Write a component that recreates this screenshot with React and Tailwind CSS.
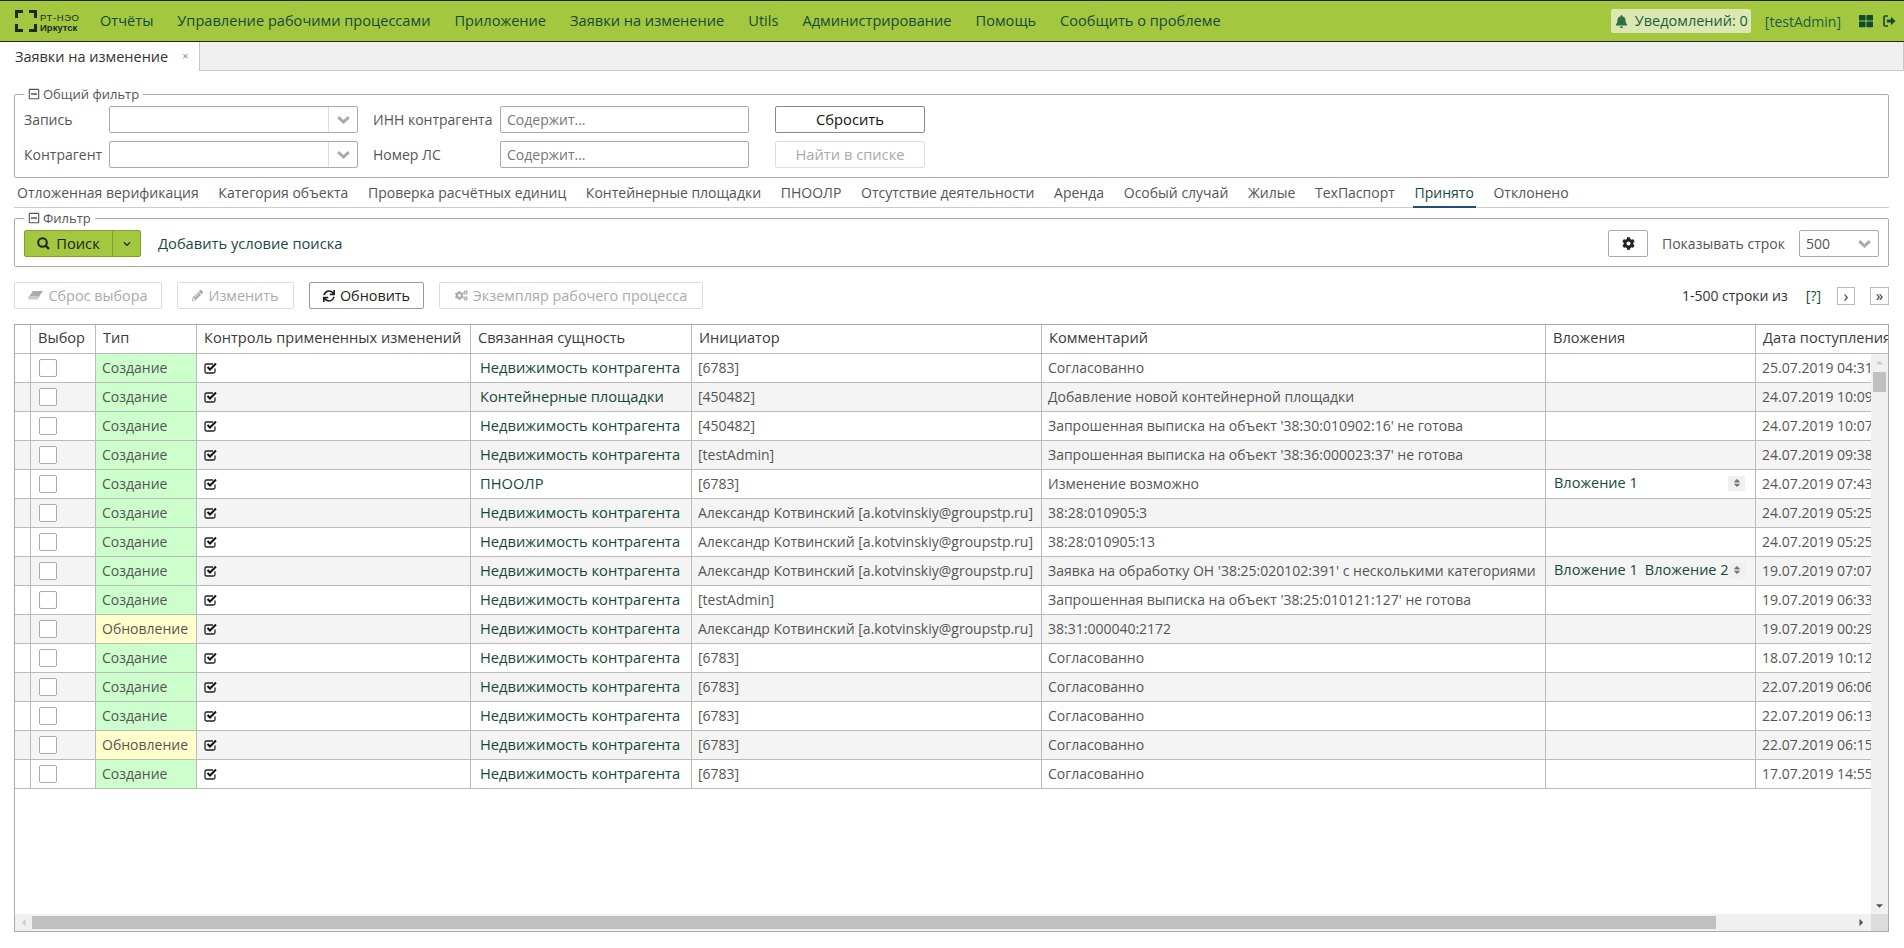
import {
  FaBell,
  FaThLarge,
  FaRegMinusSquare,
  FaChevronDown,
  FaCog,
  FaCogs,
  FaPencilAlt,
  FaSync,
  FaSort,
  FaCaretUp,
  FaCaretDown,
  FaCaretLeft,
  FaCaretRight,
} from "react-icons/fa";

const menu = [
  "Отчёты",
  "Управление рабочими процессами",
  "Приложение",
  "Заявки на изменение",
  "Utils",
  "Администрирование",
  "Помощь",
  "Сообщить о проблеме",
];

const tabs = [
  "Отложенная верификация",
  "Категория объекта",
  "Проверка расчётных единиц",
  "Контейнерные площадки",
  "ПНООЛР",
  "Отсутствие деятельности",
  "Аренда",
  "Особый случай",
  "Жилые",
  "ТехПаспорт",
  "Принято",
  "Отклонено",
];

const nedv = "Недвижимость контрагента";
const kotv = "Александр Котвинский [a.kotvinskiy@groupstp.ru]";
const soglas = "Согласованно";

const rows = [
  ["Создание", nedv, "[6783]", soglas, [], "25.07.2019 04:31"],
  ["Создание", "Контейнерные площадки", "[450482]", "Добавление новой контейнерной площадки", [], "24.07.2019 10:09"],
  ["Создание", nedv, "[450482]", "Запрошенная выписка на объект '38:30:010902:16' не готова", [], "24.07.2019 10:07"],
  ["Создание", nedv, "[testAdmin]", "Запрошенная выписка на объект '38:36:000023:37' не готова", [], "24.07.2019 09:38"],
  ["Создание", "ПНООЛР", "[6783]", "Изменение возможно", ["Вложение 1"], "24.07.2019 07:43"],
  ["Создание", nedv, kotv, "38:28:010905:3", [], "24.07.2019 05:25"],
  ["Создание", nedv, kotv, "38:28:010905:13", [], "24.07.2019 05:25"],
  ["Создание", nedv, kotv, "Заявка на обработку ОН '38:25:020102:391' с несколькими категориями", ["Вложение 1", "Вложение 2"], "19.07.2019 07:07"],
  ["Создание", nedv, "[testAdmin]", "Запрошенная выписка на объект '38:25:010121:127' не готова", [], "19.07.2019 06:33"],
  ["Обновление", nedv, kotv, "38:31:000040:2172", [], "19.07.2019 00:29"],
  ["Создание", nedv, "[6783]", soglas, [], "18.07.2019 10:12"],
  ["Создание", nedv, "[6783]", soglas, [], "22.07.2019 06:06"],
  ["Создание", nedv, "[6783]", soglas, [], "22.07.2019 06:13"],
  ["Обновление", nedv, "[6783]", soglas, [], "22.07.2019 06:15"],
  ["Создание", nedv, "[6783]", soglas, [], "17.07.2019 14:55"],
];

function Logo() {
  return (
    <div className="flex items-center w-[86px] shrink-0 pl-[1px]">
      <svg width="22" height="22" viewBox="0 0 22 22" fill="none" stroke="#1c2b22" strokeWidth="3">
        <path d="M8 1.5H1.5V8" />
        <path d="M14 1.5H20.5V8" />
        <path d="M1.5 14V20.5H8" />
        <path d="M20.5 14V20.5H14" />
      </svg>
      <div className="ml-[3px] mt-[3px] text-[9.5px] leading-[10px] font-bold text-[#1c2b22] font-['Liberation_Sans',sans-serif]">
        <div className="font-normal tracking-[0.6px]">РТ-НЭО</div>
        <div>Иркутск</div>
      </div>
    </div>
  );
}

function Chevron() {
  return (
    <svg width="13" height="8" viewBox="0 0 13 8" fill="none" stroke="#aaa" strokeWidth="3">
      <path d="M1.2 1.2L6.5 6L11.8 1.2" />
    </svg>
  );
}

function SearchIcon() {
  return (
    <svg width="13" height="13" viewBox="0 0 13 13" fill="none" stroke="#222" strokeWidth="2">
      <circle cx="5.5" cy="5.5" r="4.3" />
      <path d="M8.5 8.5L12 12" strokeWidth="2.4" />
    </svg>
  );
}

function EraserIcon() {
  return (
    <svg width="15" height="11" viewBox="0 0 15 11">
      <path d="M5 1H15L10 8H0Z" fill="#aaa" />
      <path d="M2 6H12L9.8 9.5H0Z" fill="#ccc" />
    </svg>
  );
}

function CheckIcon() {
  return (
    <svg width="14" height="12" viewBox="0 0 14 12" fill="none" className="block">
      <path d="M11 6.5V9.5A1.5 1.5 0 0 1 9.5 11H2.5A1.5 1.5 0 0 1 1 9.5V3.5A1.5 1.5 0 0 1 2.5 2H9" stroke="#222" strokeWidth="1.3" />
      <path d="M3.5 5L6 7.5L12 1.5" stroke="#111" strokeWidth="2" />
    </svg>
  );
}

function SignOutIcon() {
  return (
    <svg width="13" height="12" viewBox="0 0 13 12" fill="none">
      <path d="M5 1H2A1 1 0 0 0 1 2V10A1 1 0 0 0 2 11H5" stroke="#0f4a32" strokeWidth="1.6" />
      <path d="M4 4.5H8V1.8L12.5 6L8 10.2V7.5H4Z" fill="#0f4a32" />
    </svg>
  );
}

function Combo() {
  return (
    <div className="w-[249px] h-[27px] flex border border-[#aaa] rounded-[2px] bg-white">
      <div className="flex-1" />
      <div className="w-[29px] flex items-center justify-center border-l border-[#ddd]">
        <Chevron />
      </div>
    </div>
  );
}

function TextField() {
  return (
    <input
      className="w-[249px] h-[27px] border border-[#aaa] rounded-[2px] px-[6px] text-[14px] text-[#555] placeholder:text-[#777] outline-none"
      placeholder="Содержит..."
    />
  );
}

function Legend({ title }) {
  return (
    <legend className="px-[4px] text-[13px] leading-[18px] text-[#555] flex items-center gap-[3px]">
      <FaRegMinusSquare className="text-[12px] text-[#555]" />
      {title}
    </legend>
  );
}

function ActionButton({ icon, label, width, disabled }) {
  return (
    <button
      className={`${width} h-[27px] flex items-center justify-center gap-[5px] rounded-[2px] border text-[14.4px] bg-white ${
        disabled ? "border-[#ddd] text-[#aaa]" : "border-[#999] text-[#222]"
      }`}
    >
      {icon}
      {label}
    </button>
  );
}

function Cell({ children, className = "" }) {
  return (
    <td className={`h-[29px] border-r border-b border-[#bbb] px-[7px] pt-0 pb-[2px] whitespace-nowrap overflow-hidden ${className}`}>
      {children}
    </td>
  );
}

function Attachments({ items }) {
  if (items.length === 0) return null;
  return (
    <div className="flex items-center">
      <div className="flex-1 flex gap-[7px] pl-[2px] text-[14.5px] text-[#164a38]">
        {items.map((a) => (
          <span key={a}>{a}</span>
        ))}
      </div>
      <span className="shrink-0 w-[17px] h-[15px] bg-[#f0f0f0] flex items-center justify-center">
        <FaSort className="text-[10px] text-[#777]" />
      </span>
    </div>
  );
}

function Grid() {
  const heads = ["", "Выбор", "Тип", "Контроль примененных изменений", "Связанная сущность", "Инициатор", "Комментарий", "Вложения", "Дата поступления"];
  return (
    <div className="relative h-[608px] border border-[#aaa] overflow-hidden">
      <table className="table-fixed border-separate border-spacing-0 w-[1975px] text-[14px] text-[#555]">
        <colgroup>
          <col className="w-[16px]" />
          <col className="w-[65px]" />
          <col className="w-[101px]" />
          <col className="w-[274px]" />
          <col className="w-[221px]" />
          <col className="w-[350px]" />
          <col className="w-[504px]" />
          <col className="w-[210px]" />
          <col className="w-[234px]" />
        </colgroup>
        <thead>
          <tr>
            {heads.map((h, i) => (
              <th
                key={i}
                className="h-[29px] border-r border-b border-[#bbb] pl-[7px] pr-[4px] pb-[2px] text-left text-[14.6px] font-normal text-[#3a3a3a] whitespace-nowrap overflow-hidden"
              >
                {h}
              </th>
            ))}
          </tr>
        </thead>
        <tbody>
          {rows.map((r, i) => (
            <tr key={i} className={i % 2 === 1 ? "bg-[#f4f4f4]" : "bg-white"}>
              <Cell />
              <Cell className="!pb-0">
                <div className="w-[18px] h-[18px] ml-[1px] border border-[#aaa] rounded-[2px] bg-white" />
              </Cell>
              <Cell className={r[0] === "Создание" ? "bg-[#ccffcc] !pl-[6px]" : "bg-[#ffffcc] !pl-[6px]"}>{r[0]}</Cell>
              <Cell className="!pb-0">
                <CheckIcon />
              </Cell>
              <Cell className="text-[#164a38] text-[14.7px] !pl-[9px]">{r[1]}</Cell>
              <Cell className="!pl-[6px]">{r[2]}</Cell>
              <Cell className="!pl-[6px]">{r[3]}</Cell>
              <Cell className="!pr-[10px] !pl-[6px]">
                <Attachments items={r[4]} />
              </Cell>
              <Cell className="!pl-[6px]">{r[5]}</Cell>
            </tr>
          ))}
        </tbody>
      </table>

      <div className="absolute right-0 top-[29px] bottom-[17px] w-[17px] bg-[#f0f0f0]">
        <FaCaretUp className="absolute top-[3px] left-[3px] text-[11px] text-[#ccc]" />
        <div className="absolute top-[18px] left-[2px] w-[13px] h-[20px] bg-[#c0c0c0]" />
        <FaCaretDown className="absolute bottom-[3px] left-[3px] text-[11px] text-[#555]" />
      </div>
      <div className="absolute left-0 right-[17px] bottom-0 h-[17px] bg-[#f0f0f0]">
        <FaCaretLeft className="absolute top-[3px] left-[3px] text-[11px] text-[#ccc]" />
        <div className="absolute top-[2px] left-[17px] w-[1684px] h-[13px] bg-[#c0c0c0]" />
        <FaCaretRight className="absolute top-[3px] right-[4px] text-[11px] text-[#555]" />
      </div>
      <div className="absolute right-0 bottom-0 w-[17px] h-[17px] bg-[#dcdcdc]" />
    </div>
  );
}

export default function App() {
  return (
    <div className="w-[1904px] h-[948px] overflow-hidden bg-white font-['Open_Sans',sans-serif] text-[14px] text-[#555]">
      <header className="h-[42px] flex items-center bg-[#a3c83f] border-y border-[#222] pl-[14px] pr-[8px]">
        <Logo />
        <nav className="flex gap-[24px] text-[#164a38] text-[14.6px]">
          {menu.map((m) => (
            <span key={m}>{m}</span>
          ))}
        </nav>
        <div className="ml-auto flex items-center">
          <div className="w-[140px] h-[24px] flex items-center pl-[4px] gap-[7px] rounded-[2px] bg-[#dbe8b2] text-[14.5px] text-[#1d5c45]">
            <FaBell className="text-[13px] text-[#2f6f45]" />
            Уведомлений: 0
          </div>
          <span className="ml-[14px] text-[#1d5c45]">[testAdmin]</span>
          <FaThLarge className="ml-[18px] text-[14px] text-[#0f4a32]" />
          <span className="ml-[10px]">
            <SignOutIcon />
          </span>
        </div>
      </header>

      <div className="h-[29px] flex bg-[#f0f0f0] border-b border-r border-[#c8c8c8]">
        <div className="w-[200px] h-[29px] flex items-center pl-[15px] bg-white border-r border-[#c8c8c8] text-[14.5px] text-[#333]">
          Заявки на изменение
          <span className="ml-[14px] text-[11px] text-[#888]">×</span>
        </div>
      </div>

      <main className="pl-[14px] pr-[15px]">
        <fieldset className="mt-[14px] h-[93px] border border-[#aaa] rounded-[2px] pl-[9px] pr-[10px]">
          <Legend title="Общий фильтр" />
          <div className="mt-[3px] flex">
            <div className="flex flex-col gap-[8px] w-[85px]">
              <span className="h-[27px] leading-[27px]">Запись</span>
              <span className="h-[27px] leading-[27px]">Контрагент</span>
            </div>
            <div className="flex flex-col gap-[8px]">
              <Combo />
              <Combo />
            </div>
            <div className="flex flex-col gap-[8px] w-[127px] ml-[15px]">
              <span className="h-[27px] leading-[27px]">ИНН контрагента</span>
              <span className="h-[27px] leading-[27px]">Номер ЛС</span>
            </div>
            <div className="flex flex-col gap-[8px]">
              <TextField />
              <TextField />
            </div>
            <div className="flex flex-col gap-[8px] ml-[26px]">
              <button className="w-[150px] h-[27px] border border-[#888] rounded-[2px] text-[14.7px] text-[#111]">Сбросить</button>
              <button className="w-[150px] h-[27px] border border-[#ddd] rounded-[2px] text-[14.7px] text-[#aaa]">Найти в списке</button>
            </div>
          </div>
        </fieldset>

        <div className="h-[30px] flex items-center gap-[19.7px] pl-[3px] border-b border-[#ccc]">
          {tabs.map((t) => (
            <span
              key={t}
              className={`h-[30px] leading-[30px] ${t === "Принято" ? "border-b-2 border-[#1f4e79] text-[#164a38] -mx-[2px] px-[2px]" : ""}`}
            >
              {t}
            </span>
          ))}
        </div>

        <fieldset className="mt-[1px] h-[58px] border border-[#aaa] rounded-[2px] pl-[9px] pr-[9px]">
          <Legend title="Фильтр" />
          <div className="mt-[3px] flex items-center">
            <div className="w-[117px] h-[27px] flex rounded-[2px] border border-[#7f9f30] bg-[#a3c83f] text-[14.7px] text-[#222]">
              <div className="flex-1 flex items-center justify-center gap-[6px] border-r border-[#7f9f30]">
                <SearchIcon />
                Поиск
              </div>
              <div className="w-[27px] flex items-center justify-center">
                <FaChevronDown className="text-[8px]" />
              </div>
            </div>
            <span className="ml-[17px] text-[14.7px] text-[#164a45]">Добавить условие поиска</span>
            <div className="ml-auto flex items-center">
              <button className="w-[40px] h-[27px] flex items-center justify-center border border-[#aaa] rounded-[2px] text-[#222]">
                <FaCog className="text-[13px]" />
              </button>
              <span className="ml-[14px] w-[137px]">Показывать строк</span>
              <div className="w-[80px] h-[27px] flex items-center justify-between border border-[#aaa] rounded-[2px] pl-[6px] pr-[7px]">
                500
                <Chevron />
              </div>
            </div>
          </div>
        </fieldset>

        <div className="mt-[15px] flex items-center">
          <div className="flex gap-[15px]">
            <ActionButton disabled width="w-[148px]" icon={<EraserIcon />} label="Сброс выбора" />
            <ActionButton disabled width="w-[117px]" icon={<FaPencilAlt className="text-[11px]" />} label="Изменить" />
            <ActionButton width="w-[115px]" icon={<FaSync className="text-[12px] text-[#222]" />} label="Обновить" />
            <ActionButton disabled width="w-[264px]" icon={<FaCogs className="text-[13px]" />} label="Экземпляр рабочего процесса" />
          </div>
          <div className="ml-auto flex items-center text-[#333]">
            <span>1-500 строки из</span>
            <span className="ml-[18px] text-[#164a38]">[?]</span>
            <span className="ml-[16px] w-[18px] h-[18px] flex items-center justify-center border border-[#bbb] text-[16px] leading-none">›</span>
            <span className="ml-[15px] w-[19px] h-[18px] flex items-center justify-center border border-[#bbb] text-[15px] leading-none">»</span>
          </div>
        </div>

        <div className="mt-[15px]">
          <Grid />
        </div>
      </main>
    </div>
  );
}
